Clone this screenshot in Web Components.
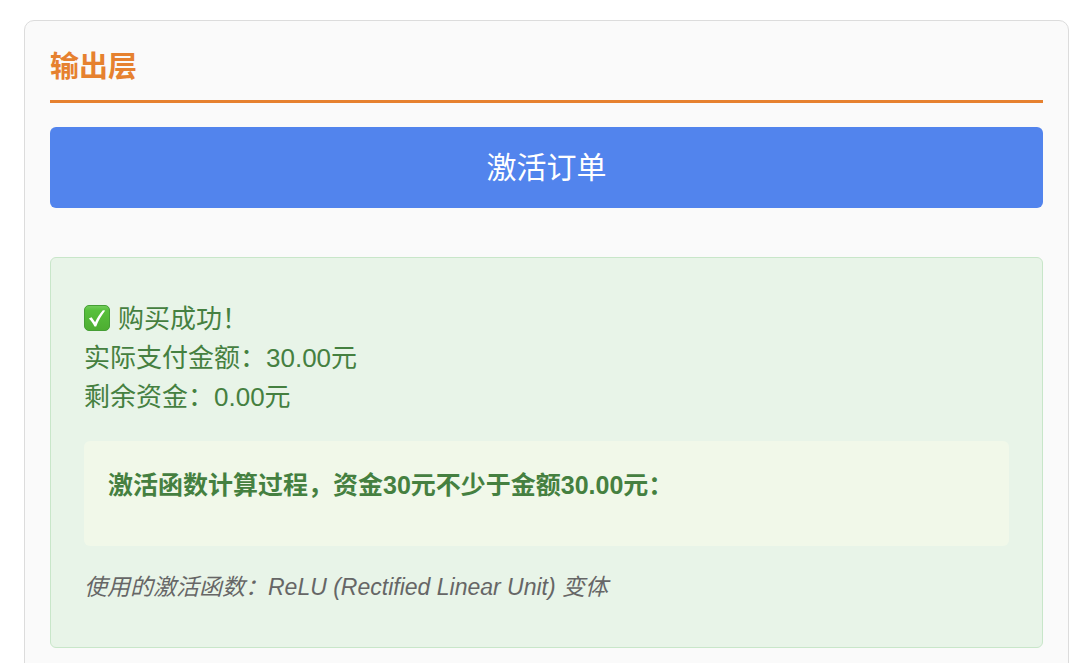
<!DOCTYPE html>
<html lang="zh-CN">
<head>
<meta charset="utf-8">
<meta name="viewport" content="width=device-width, initial-scale=1">
<title>输出层</title>
<style>
  body {
    margin: 0;
    padding: 20px 11px 0 24px;
    background: #fff;
    font-family: "Liberation Sans", Arial, "Noto Sans CJK SC", sans-serif;
  }
</style>
</head>
<body>
<layer-panel>
  <span slot="title">输出层</span>
  <activate-button>激活订单</activate-button>
  <result-card>
    <status-line icon>购买成功！</status-line>
    <status-line>实际支付金额：30.00元</status-line>
    <status-line>剩余资金：0.00元</status-line>
    <calc-box slot="process">激活函数计算过程，资金30元不少于金额30.00元：</calc-box>
    <span slot="note">使用的激活函数：ReLU (Rectified Linear Unit) 变体</span>
  </result-card>
</layer-panel>

<script>
const define = (name, html) => {
  const template = document.createElement('template');
  template.innerHTML = html;
  customElements.define(name, class extends HTMLElement {
    constructor() {
      super();
      this.attachShadow({ mode: 'open' }).append(template.content.cloneNode(true));
    }
  });
};

define('layer-panel', `
  <style>
    :host { display: block; }
    section {
      padding: 24px 25px;
      border: 1px solid #dcdcdc;
      border-radius: 10px;
      background: #fafafa;
    }
    h2 {
      margin: 0 0 24px;
      padding-bottom: 11px;
      border-bottom: 3px solid #e6812f;
      color: #e6812f;
      font-size: 29px;
      line-height: 44px;
      font-weight: 700;
    }
  </style>
  <section>
    <h2><slot name="title"></slot></h2>
    <slot></slot>
  </section>`);

define('activate-button', `
  <style>
    :host { display: block; margin-bottom: 49px; }
    button {
      display: block;
      width: 100%;
      padding: 18px 24px;
      border: 0;
      border-radius: 6px;
      background: #5284ed;
      color: #fff;
      font: inherit;
      font-size: 30px;
      line-height: 45px;
      cursor: pointer;
    }
  </style>
  <button type="button"><slot></slot></button>`);

define('result-card', `
  <style>
    :host {
      display: block;
      padding: 42px 33px;
      border: 1px solid #c8e6c9;
      border-radius: 6px;
      background: #e8f4e8;
      color: #458040;
    }
    .process { margin: 24px 0; }
    p {
      margin: 0;
      color: #666;
      font-size: 23px;
      line-height: 35px;
      font-style: italic;
    }
  </style>
  <slot></slot>
  <div class="process"><slot name="process"></slot></div>
  <p><slot name="note"></slot></p>`);

define('status-line', `
  <style>
    :host { display: flex; align-items: flex-start; gap: 8px; font-size: 26px; line-height: 39px; }
    svg { display: none; width: 26px; height: 26px; padding-top: 5px; }
    :host([icon]) svg { display: block; }
  </style>
  <svg viewBox="0 0 26 26" role="img" aria-label="成功">
    <defs>
      <linearGradient id="g" x1="0" y1="0" x2="0" y2="1">
        <stop offset="0" stop-color="#74ce5c"/>
        <stop offset=".2" stop-color="#57c03c"/>
        <stop offset="1" stop-color="#4dad31"/>
      </linearGradient>
    </defs>
    <rect x=".5" y=".5" width="25" height="25" rx="4.5" fill="url(#g)" stroke="#459e35"/>
    <path d="M4.8 13.6 7.6 12.2 11.1 17.3C13.4 12.4 15.8 8.6 18.9 5.2L21.2 5.4C17.2 10.6 14.4 15.7 12.2 21.5H10.5C9 18.5 7.2 15.8 4.8 13.6Z" fill="#fff"/>
  </svg>
  <span><slot></slot></span>`);

define('calc-box', `
  <style>
    :host {
      display: block;
      padding: 25px 24px 41px;
      border-radius: 6px;
      background: #f1f8e9;
      font-size: 25px;
      line-height: 39px;
    }
  </style>
  <strong><slot></slot></strong>`);
</script>
</body>
</html>
